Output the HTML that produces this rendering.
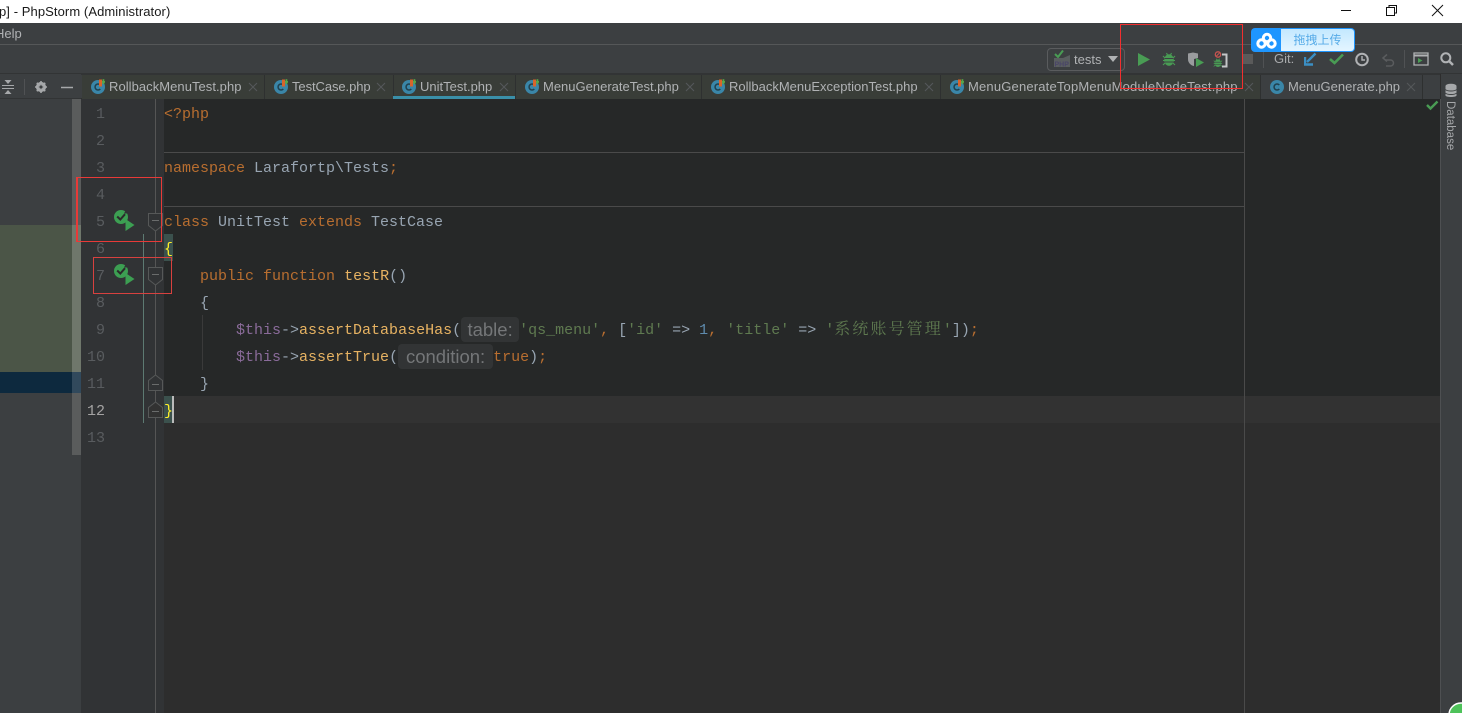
<!DOCTYPE html>
<html><head><meta charset="utf-8"><title>PhpStorm</title>
<style>
html,body{margin:0;padding:0;background:#3c3f41}
#r{position:relative;width:1462px;height:713px;overflow:hidden;background:#2d2d2d;font-family:"Liberation Sans","Noto Sans CJK SC",sans-serif}
#r div,#r svg,#r span.a{position:absolute}
.l{left:164px;height:27px;font:15px/27px "Liberation Mono","Noto Serif CJK SC",monospace;color:#98a5b2;white-space:pre}
.k{color:#b86e30}.s{color:#5f7a50}.v{color:#8a6b9a}.m{color:#e6b262}.b{color:#5f8bad}
.n{left:81px;width:24px;text-align:right;font:15px/27px "Liberation Mono",monospace;color:#595c5f;height:27px}
.t{top:75px;height:24px;background:#393d38;box-sizing:border-box;border-right:1px solid #2e3030}
.tt{top:78px;font-size:13px;line-height:18px;color:#b0b2b4;white-space:nowrap}
.in{display:inline-block;height:25px;background:#323435;border-radius:4px;color:#747678;font:18.500px/25px "Liberation Sans",sans-serif;text-align:center;vertical-align:top;margin-top:0}
.zh{font-family:"Noto Serif CJK SC",serif;font-size:16px;line-height:0;letter-spacing:2.1px;color:#5f7a50}
</style></head><body><div id="r">

<svg width="0" height="0" style="left:0;top:0"><defs>
<g id="fi"><circle cx="0" cy="0" r="7" fill="#3a86a8"/><path d="M2.300-2A3 3 0 1 0 2.300 2" fill="none" stroke="#20404e" stroke-width="1.500"/></g>
<g id="fp"><use href="#fi"/><path d="M1-7.500h3v7h-3z" fill="#d8642c"/><path d="M4-6h3v1.800h-3z" fill="#57a64a"/><path d="M4.500-7.800h1.800v5h-1.800z" fill="#57a64a"/></g>
<g id="xx"><path d="M1 1L9 9M9 1L1 9" stroke="#55585a" stroke-width="1.100"/></g>
<g id="rn"><circle cx="7" cy="7" r="7" fill="#3c9f52"/><path d="M11.500 0.500L14.500 3.500H10Z" fill="#313335"/><path d="M3.200 6.500L6.300 9.500L11 4.200" fill="none" stroke="#2b2b2b" stroke-width="2"/><path d="M11.500 9V21L20.500 15Z" fill="#3c9f52"/></g>
<g id="bg"><ellipse cx="7" cy="8" rx="4.800" ry="5.800" fill="#499c54"/><path d="M1 4L3 6M13 4L11 6M1 8.500H3M13 8.500H11M1 13L3 11M13 13L11 11M4.500 1L5.500 3M9.500 1L8.500 3" stroke="#499c54" stroke-width="1.100"/><path d="M2.800 6.500H11.200M2.800 10H11.200" stroke="#3c3f41" stroke-width=".9"/></g>
</defs></svg>

<!-- title bar -->
<div style="left:0;top:0;width:1462px;height:23px;background:#fff"></div>
<div style="left:-1px;top:3px;font-size:13px;line-height:18px;color:#1a1a1a;white-space:nowrap;letter-spacing:.08px">p] - PhpStorm (Administrator)</div>
<svg style="left:1335px;top:0" width="127" height="23"><path d="M6 10.500H16" stroke="#111"/><path d="M51.500 7.500h8v8h-8zM54 7.500V5.500h7.500v7.500h-2" fill="none" stroke="#111"/><path d="M97 5L108 16M108 5L97 16" stroke="#111"/></svg>

<!-- menu / toolbar -->
<div style="left:0;top:23px;width:1462px;height:21px;background:#3c3f41"></div>
<div style="left:-5px;top:25px;font-size:13px;line-height:18px;color:#b0b2b4">Help</div>
<div style="left:0;top:44px;width:1462px;height:1px;background:#555758"></div>
<div style="left:0;top:45px;width:1462px;height:29px;background:#3c3f41"></div>
<div style="left:0;top:73px;width:1462px;height:1px;background:#323435"></div>

<div style="left:1047px;top:48px;width:76px;height:21px;border:1px solid #5a5c5e;border-radius:4px"></div>
<svg style="left:1053px;top:49px" width="20" height="19"><path d="M2 5L5 8L10 1.500" fill="none" stroke="#499c54" stroke-width="2"/><path d="M1 18V9H10L17 6V18Z" fill="#5a5e60"/><text x="1.500" y="17.500" font-family="Liberation Sans" font-size="7" font-weight="bold" fill="#4a4668">PHP</text></svg>
<div style="left:1074px;top:51px;font-size:13px;line-height:18px;color:#b0b2b4">tests</div>
<svg style="left:1108px;top:56px" width="11" height="7"><path d="M0 0H10L5 6Z" fill="#b0b2b4"/></svg>

<svg style="left:1138px;top:53px" width="13" height="14"><path d="M0 0V13L12 6.500Z" fill="#499c54"/></svg>
<svg style="left:1162px;top:52px" width="14" height="15"><use href="#bg"/></svg>
<svg style="left:1187px;top:52px" width="18" height="16"><path d="M1 1.500L6 0.500L11 1.500V6L7 7V14A7 7 0 0 1 1 7Z" fill="#9a9c9e"/><path d="M9 6V15L17 10.500Z" fill="#499c54"/></svg>
<svg style="left:1213px;top:51px" width="15" height="17"><circle cx="5" cy="3.500" r="2.700" fill="none" stroke="#c75450" stroke-width="1.300"/><path d="M3 5.500L7 1.500" stroke="#c75450"/><g transform="translate(0,7) scale(.7,.65)"><use href="#bg"/></g><path d="M9 3.500H13.500V15.500H9" fill="none" stroke="#c4c6c8" stroke-width="2"/></svg>
<div style="left:1243px;top:54px;width:10px;height:10px;background:#5a5a5a"></div>
<div style="left:1263px;top:50px;width:1px;height:18px;background:#505254"></div>
<div style="left:1274px;top:50px;font-size:13px;line-height:18px;color:#a8aaac">Git:</div>
<svg style="left:1304px;top:52px" width="13" height="14"><path d="M11.500 1.500L3 10" stroke="#3b8fc4" stroke-width="2.400"/><path d="M1 5V12.500H9" fill="none" stroke="#3b8fc4" stroke-width="2.400"/></svg>
<svg style="left:1329px;top:53px" width="15" height="12"><path d="M1 6L5.500 10L14 1.500" fill="none" stroke="#499c54" stroke-width="2.600"/></svg>
<svg style="left:1355px;top:52px" width="14" height="15"><circle cx="7" cy="7.500" r="5.800" fill="none" stroke="#b0b2b4" stroke-width="2"/><path d="M7 4V8H10" fill="none" stroke="#b0b2b4" stroke-width="1.400"/></svg>
<svg style="left:1381px;top:52px" width="15" height="15"><path d="M4 8H9.500A3 3 0 0 1 9.500 14H5" fill="none" stroke="#5a5c5e" stroke-width="1.500"/><path d="M6 2.500L2 6L6 9.500" fill="none" stroke="#5a5c5e" stroke-width="1.500"/></svg>
<div style="left:1404px;top:50px;width:1px;height:18px;background:#505254"></div>
<svg style="left:1413px;top:52px" width="16" height="14"><path d="M1 1H15V13H1Z" fill="none" stroke="#b0b2b4" stroke-width="1.300"/><path d="M1 3.500H15" stroke="#b0b2b4" stroke-width="2"/><path d="M5 6V11L9.500 8.500Z" fill="#499c54"/></svg>
<svg style="left:1440px;top:52px" width="14" height="14"><circle cx="5.800" cy="5.800" r="4.500" fill="none" stroke="#b0b2b4" stroke-width="2"/><path d="M9 9L13 13" stroke="#b0b2b4" stroke-width="2.500"/></svg>

<!-- left panel -->
<div style="left:0;top:74px;width:81px;height:639px;background:#3c3f41"></div>
<div style="left:0;top:74px;width:84px;height:24px;background:#3c3f41"></div>
<div style="left:0;top:98px;width:81px;height:1px;background:#323435"></div>
<svg style="left:0;top:78px" width="76" height="18"><path d="M2 7.500H14M2 10.500H14" stroke="#a6a8aa"/><path d="M4.500 2L8 6L11.500 2ZM4.500 16L8 12L11.500 16Z" fill="#a6a8aa"/><path d="M24.500 1V17" stroke="#505254"/><circle cx="41" cy="9" r="3.800" fill="none" stroke="#a6a8aa" stroke-width="2.600"/><path d="M41 3V15M35 9H47M36.800 4.800L45.200 13.200M45.200 4.800L36.800 13.200" stroke="#a6a8aa" stroke-width="1.600"/><circle cx="41" cy="9" r="1.600" fill="#3c3f41"/><path d="M61 9.500H73" stroke="#a6a8aa" stroke-width="1.500"/></svg>
<div style="left:0;top:225px;width:72px;height:147px;background:#4b5547"></div>
<div style="left:0;top:372px;width:72px;height:21px;background:#0d293e"></div>
<div style="left:72px;top:99px;width:9px;height:356px;background:#5a5c5c"></div>
<div style="left:72px;top:225px;width:9px;height:147px;background:#6f776b"></div>
<div style="left:72px;top:372px;width:9px;height:21px;background:#31495c"></div>

<!-- tabs -->
<div style="left:81px;top:74px;width:1359px;height:1px;background:#323435"></div>
<div style="left:81px;top:98px;width:1359px;height:1px;background:#2e3030"></div>
<div class="t" style="left:82px;width:183px"></div>
<div class="t" style="left:265px;width:129px"></div>
<div class="t" style="left:394px;width:122px"></div>
<div style="left:393px;top:96px;width:122px;height:3px;background:#3a8fa8"></div>
<div class="t" style="left:516px;width:186px"></div>
<div class="t" style="left:702px;width:239px"></div>
<div class="t" style="left:941px;width:320px"></div>
<div class="t" style="left:1261px;width:162px;background:#3c3f41"></div>
<div style="left:1423px;top:75px;width:17px;height:24px;background:#3c3f41"></div>
<svg style="left:0;top:70px" width="1462" height="34">
<use href="#fp" x="98" y="17"/><use href="#fp" x="281" y="17"/><use href="#fp" x="409" y="17"/><use href="#fp" x="532" y="17"/><use href="#fp" x="718" y="17"/><use href="#fp" x="957" y="17"/><use href="#fi" x="1277" y="17"/>
<use href="#xx" x="248" y="12"/><use href="#xx" x="376" y="12"/><use href="#xx" x="499" y="12"/><use href="#xx" x="685" y="12"/><use href="#xx" x="924" y="12"/><use href="#xx" x="1244" y="12"/><use href="#xx" x="1406" y="12"/>
</svg>
<div class="tt" style="left:109px;letter-spacing:.05px">RollbackMenuTest.php</div>
<div class="tt" style="left:292px;letter-spacing:-.08px">TestCase.php</div>
<div class="tt" style="left:420px">UnitTest.php</div>
<div class="tt" style="left:543px">MenuGenerateTest.php</div>
<div class="tt" style="left:729px">RollbackMenuExceptionTest.php</div>
<div class="tt" style="left:968px;letter-spacing:.18px">MenuGenerateTopMenuModuleNodeTest.php</div>
<div class="tt" style="left:1288px">MenuGenerate.php</div>

<!-- gutter -->
<div style="left:81px;top:99px;width:83px;height:614px;background:#313335"></div>

<!-- editor -->
<div style="left:164px;top:99px;width:1276px;height:297px;background:#262828"></div>
<div style="left:81px;top:396px;width:1359px;height:27px;background:#323232"></div>
<div style="left:81px;top:396px;width:83px;height:27px;background:#313335"></div>
<div style="left:164px;top:152px;width:1080px;height:1px;background:#4a4a4a"></div>
<div style="left:164px;top:206px;width:1080px;height:1px;background:#4a4a4a"></div>
<div style="left:1244px;top:99px;width:1px;height:614px;background:#4a4a4a"></div>
<div style="left:1440px;top:99px;width:1px;height:614px;background:#4e5052"></div>
<div style="left:155px;top:99px;width:1px;height:614px;background:#555"></div>
<div style="left:143px;top:234px;width:1px;height:189px;background:#5d7a72"></div>
<div style="left:202px;top:315px;width:1px;height:55px;background:#3a3a3a"></div>

<div class="n" style="top:101px">1</div>
<div class="n" style="top:128px">2</div>
<div class="n" style="top:155px">3</div>
<div class="n" style="top:182px">4</div>
<div class="n" style="top:209px">5</div>
<div class="n" style="top:236px">6</div>
<div class="n" style="top:263px">7</div>
<div class="n" style="top:290px">8</div>
<div class="n" style="top:317px">9</div>
<div class="n" style="top:344px">10</div>
<div class="n" style="top:371px">11</div>
<div class="n" style="top:398px;color:#a4a3a3">12</div>
<div class="n" style="top:425px">13</div>

<div style="left:164px;top:234px;width:9px;height:27px;background:#3b514d"></div>
<div style="left:164px;top:396px;width:8px;height:27px;background:#3b514d"></div>
<div style="left:172px;top:396px;width:2px;height:27px;background:#bbb"></div>

<div class="l k" style="top:101px">&lt;?php</div>
<div class="l" style="top:155px"><span class="k">namespace</span> Larafortp\Tests<span class="k">;</span></div>
<div class="l" style="top:209px"><span class="k">class</span> UnitTest <span class="k">extends</span> TestCase</div>
<div class="l" style="top:236px;color:#ffef28">{</div>
<div class="l" style="top:263px">    <span class="k">public function</span> <span class="m">testR</span>()</div>
<div class="l" style="top:290px">    {</div>
<div class="l" style="top:317px">        <span class="v">$this</span>-&gt;<span class="m">assertDatabaseHas</span>(<span class="in" style="width:58px">table:</span><span class="s">'qs_menu'</span><span class="k">,</span> [<span class="s">'id'</span> =&gt; <span class="b">1</span><span class="k">,</span> <span class="s">'title'</span> =&gt; <span class="s">'</span><span class="zh">系统账号管理</span><span class="s">'</span>])<span class="k">;</span></div>
<div class="l" style="top:344px">        <span class="v">$this</span>-&gt;<span class="m">assertTrue</span>(<span class="in" style="width:95px">condition:</span><span class="k">true</span>)<span class="k">;</span></div>
<div class="l" style="top:371px">    }</div>
<div class="l" style="top:398px;color:#ffef28">}</div>

<!-- fold markers + run icons -->
<svg style="left:110px;top:205px" width="60" height="220">
<g fill="#313335" stroke="#565858"><path d="M38.500 8.500H52.500V20.500L45.500 26L38.500 20.500Z"/><path d="M38.500 62.500H52.500V74.500L45.500 80L38.500 74.500Z"/><path d="M38.500 185.500V175.500L45.500 170L52.500 175.500V185.500Z"/><path d="M38.500 212.500V202.500L45.500 197L52.500 202.500V212.500Z" fill="#323232"/></g>
<path d="M42 15.500H49M42 69.500H49M42 179.500H49M42 206.500H49" stroke="#6a6c6c"/>
<use href="#rn" x="4" y="5"/><use href="#rn" x="4" y="59"/>
</svg>

<!-- right strip -->
<svg style="left:1426px;top:100px" width="13" height="11"><path d="M1 5L4.500 8.500L11.500 1.500" fill="none" stroke="#499c54" stroke-width="2.400"/></svg>
<div style="left:1441px;top:74px;width:21px;height:639px;background:#3c3f41"></div>
<svg style="left:1444px;top:83px" width="14" height="15"><ellipse cx="7" cy="3" rx="5.500" ry="2.300" fill="#a6a8aa"/><path d="M1.500 3V12.500C1.500 14.500 12.500 14.500 12.500 12.500V3" fill="#a6a8aa"/><path d="M1.500 6.500C3 8.500 11 8.500 12.500 6.500M1.500 10C3 12 11 12 12.500 10" fill="none" stroke="#3c3f41"/></svg>
<div style="left:1443px;top:101px;width:13px;height:50px;writing-mode:vertical-rl;font-size:11.500px;line-height:13px;color:#a6a8aa;white-space:nowrap">Database</div>
<svg style="left:1446px;top:700px" width="16" height="13"><circle cx="15" cy="15" r="12" fill="#4ec25a" stroke="#fff" stroke-width="1.500"/></svg>

<!-- annotation rectangles -->
<div style="left:77px;top:177px;width:83px;height:63px;border:1px solid #e83a38"></div>
<div style="left:76px;top:177px;width:2px;height:65px;background:#e83a38"></div>
<div style="left:93px;top:257px;width:77px;height:35px;border:1px solid #d8413f"></div>
<div style="left:1120px;top:24px;width:121px;height:63px;border:1px solid #f22f2f"></div>

<!-- upload widget -->
<div style="left:1251px;top:28px;width:104px;height:24px;border-radius:4px;background:#1e96ff"></div>
<div style="left:1281px;top:29px;width:73px;height:22px;border-radius:0 3px 3px 0;background:linear-gradient(#c3e8ff,#e4f5ff)"></div>
<div style="left:1281px;top:31px;width:73px;text-align:center;font-size:12px;line-height:18px;color:#58ace8">拖拽上传</div>
<svg style="left:1256px;top:32px" width="22" height="18"><g fill="none" stroke="#fff" stroke-width="3"><circle cx="11" cy="6" r="3.700"/><circle cx="5.500" cy="11.500" r="3.700"/><circle cx="15.500" cy="11.500" r="3.700"/></g></svg>
</div></body></html>
